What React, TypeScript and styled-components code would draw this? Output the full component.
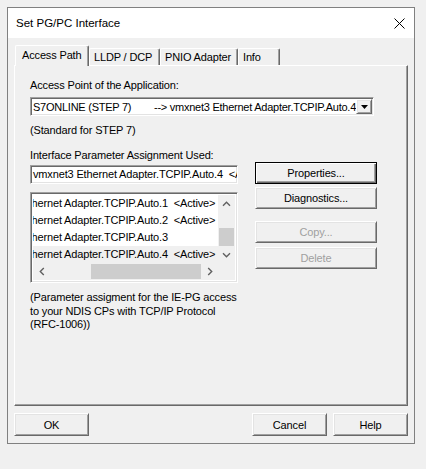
import React from 'react';
import styled, { createGlobalStyle, css } from 'styled-components';

const GlobalStyle = createGlobalStyle`
  html, body { margin: 0; padding: 0; background: #f0f0f0; }
  body {
    font-family: "Liberation Sans", Arial, sans-serif;
    font-size: 11px;
    letter-spacing: -0.15px;
    color: #000;
  }
  * { box-sizing: border-box; }
`;

const sunken = css`
  border: 1px solid;
  border-color: #a0a0a0 #ffffff #ffffff #a0a0a0;
  box-shadow: inset 1px 1px #696969, inset -1px -1px #e3e3e3;
`;

const raised = css`
  border: 1px solid;
  border-color: #ffffff #696969 #696969 #ffffff;
  box-shadow: inset 1px 1px #e3e3e3, inset -1px -1px #a0a0a0;
`;

const Window = styled.div`
  margin: 7px 0 0 7px;
  width: 408px;
  height: 437px;
  border: 1px solid #808080;
  background: #f0f0f0;
  display: flex;
  flex-direction: column;
`;

const TitleBar = styled.div`
  flex: none;
  height: 30px;
  background: #ffffff;
  display: flex;
  align-items: center;
  justify-content: space-between;
  padding: 0 9px 0 8px;
`;

const Title = styled.span`
  font-size: 11.5px;
  letter-spacing: 0;
`;

const Body = styled.div`
  flex: 1;
  display: flex;
  flex-direction: column;
  padding: 7px 6px 7px 6px;
`;

const TabStrip = styled.div`
  flex: none;
  height: 20px;
  display: flex;
  align-items: flex-end;
  padding-left: 1px;
  position: relative;
  z-index: 1;
`;

const Tab = styled.div<{ $w: number; $active?: boolean }>`
  width: ${(p) => p.$w}px;
  height: ${(p) => (p.$active ? 21 : 17)}px;
  margin-bottom: ${(p) => (p.$active ? -1 : 0)}px;
  padding: 0 0 ${(p) => (p.$active ? 2 : 0)}px ${(p) => (p.$active ? 6 : 4)}px;
  background: #f0f0f0;
  border-top: 1px solid #ffffff;
  border-left: 1px solid #ffffff;
  border-right: 1px solid #696969;
  border-radius: 2px 2px 0 0;
  box-shadow: inset -1px 0 #a0a0a0;
  display: flex;
  align-items: center;
  white-space: nowrap;
`;

const Pane = styled.div`
  flex: none;
  height: 341px;
  border: 1px solid;
  border-color: #ffffff #696969 #696969 #ffffff;
  box-shadow: inset -1px -1px #a0a0a0;
  padding: 13px 0 0 15px;
  display: flex;
  flex-direction: column;
`;

const Label = styled.div<{ $mt?: number }>`
  line-height: 13px;
  margin-top: ${(p) => p.$mt ?? 0}px;
  white-space: nowrap;
`;

const Combo = styled.div`
  ${sunken};
  width: 344px;
  height: 19px;
  margin-top: 5px;
  background: #ffffff;
  display: flex;
  align-items: center;
  padding: 1px;
`;

const ComboText = styled.div`
  flex: 1;
  display: flex;
  overflow: hidden;
  white-space: pre;
  padding-left: 1px;
  letter-spacing: -0.25px;
`;

const ComboName = styled.span`
  flex: none;
  width: 121px;
`;

const DropButton = styled.div`
  ${raised};
  flex: none;
  width: 16px;
  height: 15px;
  background: #f0f0f0;
  display: flex;
  align-items: center;
  justify-content: center;
`;

const Columns = styled.div`
  display: grid;
  grid-template-columns: 208px 122px;
  column-gap: 17px;
  align-items: start;
`;

const LeftCol = styled.div`
  display: flex;
  flex-direction: column;
  margin-top: 3px;
`;

const RightCol = styled.div`
  display: flex;
  flex-direction: column;
`;

const Field = styled.div`
  ${sunken};
  height: 19px;
  background: #ffffff;
  padding: 0 2px;
  line-height: 17px;
  white-space: pre;
  overflow: hidden;
`;

const ListBox = styled.div`
  ${sunken};
  margin-top: 8px;
  height: 91px;
  background: #ffffff;
  padding: 2px;
  display: grid;
  grid-template-columns: 1fr 17px;
  grid-template-rows: 1fr 17px;
`;

const Rows = styled.div`
  overflow: hidden;
`;

const Row = styled.div<{ $sel?: boolean }>`
  height: 17px;
  line-height: 17px;
  background: ${(p) => (p.$sel ? '#f0f0f0' : 'transparent')};
  white-space: pre;
  overflow: hidden;
`;

const RowText = styled.span`
  display: block;
  margin-left: -55px;
`;

const VScroll = styled.div`
  background: #f0f0f0;
  display: flex;
  flex-direction: column;
`;

const HScroll = styled.div`
  background: #f0f0f0;
  display: flex;
`;

const ArrowBox = styled.div`
  flex: none;
  width: 17px;
  height: 17px;
  display: flex;
  align-items: center;
  justify-content: center;
`;

const VTrack = styled.div`
  flex: 1;
  display: flex;
  flex-direction: column;
  justify-content: flex-end;
  padding: 0 1px;
`;

const HTrack = styled.div`
  flex: 1;
  display: flex;
  justify-content: flex-end;
  padding: 1px 0;
`;

const VThumb = styled.div`
  height: 18px;
  background: #cdcdcd;
`;

const HThumb = styled.div`
  width: 110px;
  background: #cdcdcd;
`;

const Corner = styled.div`
  background: #f0f0f0;
`;

const Note = styled.div`
  margin-top: 8px;
  line-height: 13.5px;
  white-space: nowrap;
`;

const Button = styled.button<{ $w: number; $mt?: number; $default?: boolean }>`
  ${raised};
  width: ${(p) => p.$w}px;
  height: 22px;
  margin: ${(p) => p.$mt ?? 0}px 0 0 0;
  padding: 0;
  background: #f0f0f0;
  font-family: "Liberation Sans", Arial, sans-serif;
  font-size: 11px;
  letter-spacing: -0.15px;
  color: #000;
  ${(p) =>
    p.$default &&
    css`
      border: 1px solid #000000;
      box-shadow: inset 1px 1px #ffffff, inset -1px -1px #696969, inset -2px -2px #a0a0a0;
    `}
  &:disabled {
    color: #a0a0a0;
  }
`;

const Footer = styled.div`
  flex: none;
  margin-top: 7px;
  height: 23px;
  display: flex;
  justify-content: space-between;
`;

const FooterGroup = styled.div`
  display: flex;
  gap: 6px;
`;

const FooterButton = styled(Button)`
  height: 23px;
`;

type Dir = 'up' | 'down' | 'left' | 'right';

const Chevron = ({ dir }: { dir: Dir }) => {
  const vertical = dir === 'up' || dir === 'down';
  const w = vertical ? 9 : 6;
  const h = vertical ? 6 : 9;
  const d: Record<Dir, string> = {
    up: 'M1 4.8 L4.5 1.3 L8 4.8',
    down: 'M1 1.2 L4.5 4.7 L8 1.2',
    left: 'M4.8 1 L1.3 4.5 L4.8 8',
    right: 'M1.2 1 L4.7 4.5 L1.2 8',
  };
  return (
    <svg width={w} height={h} viewBox={`0 0 ${w} ${h}`}>
      <path d={d[dir]} fill="none" stroke="#606060" strokeWidth="1.4" />
    </svg>
  );
};

const CloseIcon = () => (
  <svg width="11" height="11" viewBox="0 0 11 11">
    <path d="M0.5 0.5 L10.5 10.5 M10.5 0.5 L0.5 10.5" stroke="#000" strokeWidth="1" />
  </svg>
);

const DownTriangle = () => (
  <svg width="7" height="4" viewBox="0 0 7 4">
    <polygon points="0,0 7,0 3.5,4" fill="#000" />
  </svg>
);

const adapters = [
  { text: 'vmxnet3 Ethernet Adapter.TCPIP.Auto.1  <Active>' },
  { text: 'vmxnet3 Ethernet Adapter.TCPIP.Auto.2  <Active>' },
  { text: 'vmxnet3 Ethernet Adapter.TCPIP.Auto.3' },
  { text: 'vmxnet3 Ethernet Adapter.TCPIP.Auto.4  <Active>', sel: true },
];

const tabs = [
  { label: 'Access Path', w: 74, active: true },
  { label: 'LLDP / DCP', w: 71 },
  { label: 'PNIO Adapter', w: 78 },
  { label: 'Info', w: 42 },
];

export default function App() {
  return (
    <>
      <GlobalStyle />
      <Window>
        <TitleBar>
          <Title>Set PG/PC Interface</Title>
          <CloseIcon />
        </TitleBar>
        <Body>
          <TabStrip>
            {tabs.map((t) => (
              <Tab key={t.label} $w={t.w} $active={t.active}>
                {t.label}
              </Tab>
            ))}
          </TabStrip>
          <Pane>
            <Label>Access Point of the Application:</Label>
            <Combo>
              <ComboText>
                <ComboName>S7ONLINE (STEP 7)</ComboName>
                <span>--&gt; vmxnet3 Ethernet Adapter.TCPIP.Auto.4</span>
              </ComboText>
              <DropButton>
                <DownTriangle />
              </DropButton>
            </Combo>
            <Label $mt={8}>(Standard for STEP 7)</Label>
            <Label $mt={12}>Interface Parameter Assignment Used:</Label>
            <Columns>
              <LeftCol>
                <Field>vmxnet3 Ethernet Adapter.TCPIP.Auto.4  &lt;Active&gt;</Field>
                <ListBox>
                  <Rows>
                    {adapters.map((a) => (
                      <Row key={a.text} $sel={a.sel}>
                        <RowText>{a.text}</RowText>
                      </Row>
                    ))}
                  </Rows>
                  <VScroll>
                    <ArrowBox>
                      <Chevron dir="up" />
                    </ArrowBox>
                    <VTrack>
                      <VThumb />
                    </VTrack>
                    <ArrowBox>
                      <Chevron dir="down" />
                    </ArrowBox>
                  </VScroll>
                  <HScroll>
                    <ArrowBox>
                      <Chevron dir="left" />
                    </ArrowBox>
                    <HTrack>
                      <HThumb />
                    </HTrack>
                    <ArrowBox>
                      <Chevron dir="right" />
                    </ArrowBox>
                  </HScroll>
                  <Corner />
                </ListBox>
                <Note>
                  (Parameter assigment for the IE-PG access
                  <br />
                  to your NDIS CPs with TCP/IP Protocol
                  <br />
                  (RFC-1006))
                </Note>
              </LeftCol>
              <RightCol>
                <Button $w={122} $default>
                  Properties...
                </Button>
                <Button $w={122} $mt={3}>
                  Diagnostics...
                </Button>
                <Button $w={122} $mt={12} disabled>
                  Copy...
                </Button>
                <Button $w={122} $mt={4} disabled>
                  Delete
                </Button>
              </RightCol>
            </Columns>
          </Pane>
          <Footer>
            <FooterButton $w={75}>OK</FooterButton>
            <FooterGroup>
              <FooterButton $w={75}>Cancel</FooterButton>
              <FooterButton $w={75}>Help</FooterButton>
            </FooterGroup>
          </Footer>
        </Body>
      </Window>
    </>
  );
}
